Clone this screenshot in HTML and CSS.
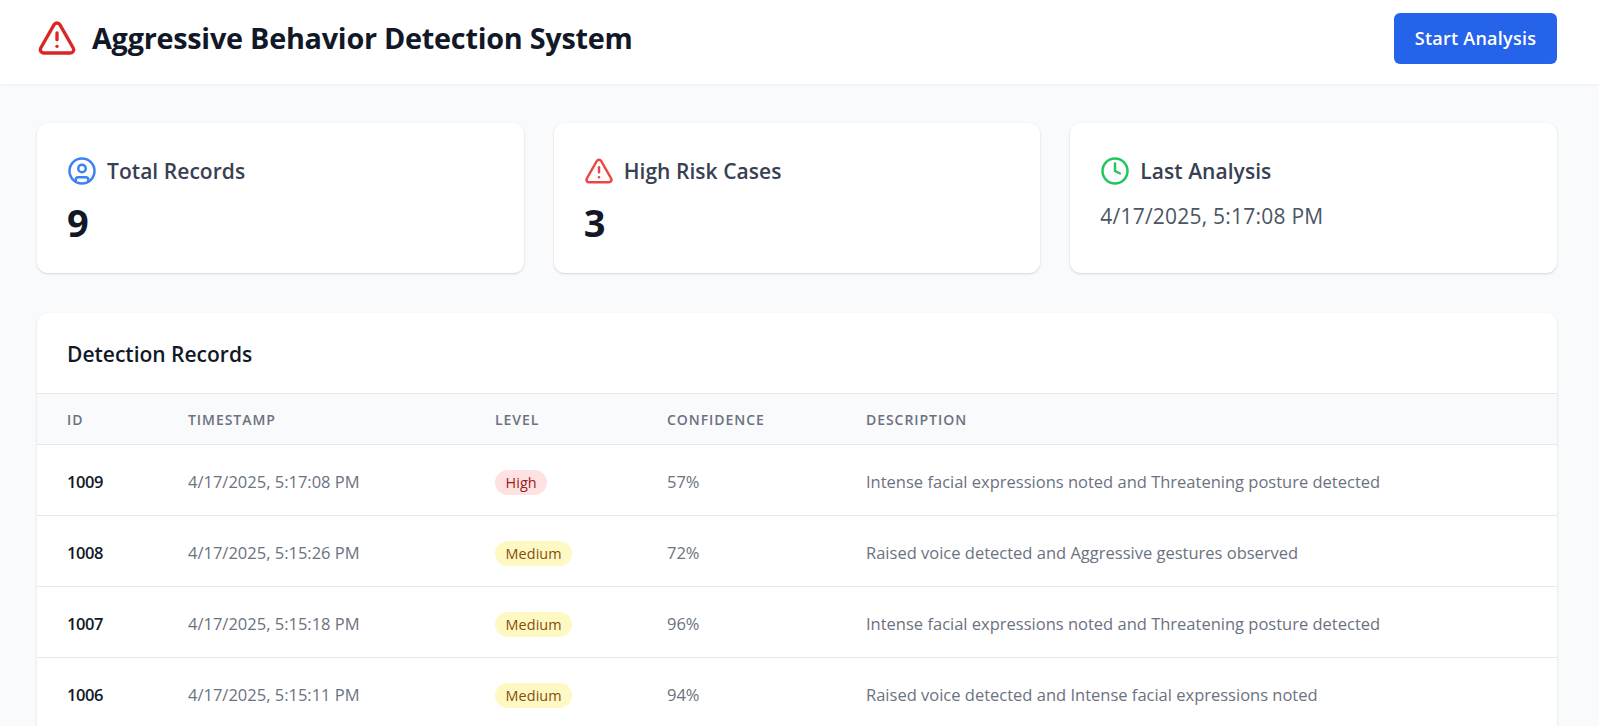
FILE: index.html
```html
<!DOCTYPE html>
<html lang="en">
<head>
<meta charset="utf-8">
<title>Aggressive Behavior Detection System</title>
<link rel="stylesheet" href="styles.css">
</head>
<body>
<header class="topbar">
  <div class="brand">
    <svg class="brand-icon" viewBox="0 0 24 24" fill="none" stroke="currentColor" stroke-width="2" stroke-linecap="round" stroke-linejoin="round"><path d="m21.73 18-8-14a2 2 0 0 0-3.48 0l-8 14A2 2 0 0 0 4 21h16a2 2 0 0 0 1.73-3Z"/><path d="M12 9v4"/><path d="M12 17h.01"/></svg>
    <h1 class="title">Aggressive Behavior Detection System</h1>
  </div>
  <button class="primary">Start Analysis</button>
</header>
<main class="content">
  <section class="stats">
    <article class="card">
      <div class="card-head">
        <svg class="icon icon-blue" viewBox="0 0 24 24" fill="none" stroke="currentColor" stroke-width="2" stroke-linecap="round" stroke-linejoin="round"><circle cx="12" cy="12" r="10"/><circle cx="12" cy="10" r="3"/><path d="M7 20.662V19a2 2 0 0 1 2-2h6a2 2 0 0 1 2 2v1.662"/></svg>
        <h2 class="card-title">Total Records</h2>
      </div>
      <p class="stat">9</p>
    </article>
    <article class="card">
      <div class="card-head">
        <svg class="icon icon-red" viewBox="0 0 24 24" fill="none" stroke="currentColor" stroke-width="2" stroke-linecap="round" stroke-linejoin="round"><path d="m21.73 18-8-14a2 2 0 0 0-3.48 0l-8 14A2 2 0 0 0 4 21h16a2 2 0 0 0 1.73-3Z"/><path d="M12 9v4"/><path d="M12 17h.01"/></svg>
        <h2 class="card-title">High Risk Cases</h2>
      </div>
      <p class="stat">3</p>
    </article>
    <article class="card">
      <div class="card-head">
        <svg class="icon icon-green" viewBox="0 0 24 24" fill="none" stroke="currentColor" stroke-width="2" stroke-linecap="round" stroke-linejoin="round"><circle cx="12" cy="12" r="10"/><polyline points="12 6 12 12 16 14"/></svg>
        <h2 class="card-title">Last Analysis</h2>
      </div>
      <p class="stat-time">4/17/2025, 5:17:08 PM</p>
    </article>
  </section>
  <section class="panel">
    <h2 class="panel-title">Detection Records</h2>
    <table class="records">
      <thead>
        <tr><th class="c-id">ID</th><th class="c-time">Timestamp</th><th class="c-level">Level</th><th class="c-conf">Confidence</th><th>Description</th></tr>
      </thead>
      <tbody>
        <tr><td class="id">1009</td><td>4/17/2025, 5:17:08 PM</td><td><span class="badge high">High</span></td><td>57%</td><td>Intense facial expressions noted and Threatening posture detected</td></tr>
        <tr><td class="id">1008</td><td>4/17/2025, 5:15:26 PM</td><td><span class="badge medium">Medium</span></td><td>72%</td><td>Raised voice detected and Aggressive gestures observed</td></tr>
        <tr><td class="id">1007</td><td>4/17/2025, 5:15:18 PM</td><td><span class="badge medium">Medium</span></td><td>96%</td><td>Intense facial expressions noted and Threatening posture detected</td></tr>
        <tr><td class="id">1006</td><td>4/17/2025, 5:15:11 PM</td><td><span class="badge medium">Medium</span></td><td>94%</td><td>Raised voice detected and Intense facial expressions noted</td></tr>
      </tbody>
    </table>
  </section>
</main>
</body>
</html>
```
FILE: styles.css
```css
* { box-sizing: border-box; }
html, body { height: 100%; }
body {
  margin: 0;
  background: #f9fafb;
  font-family: "Open Sans", "Noto Sans", sans-serif;
  color: #111827;
  overflow: hidden;
}
.topbar {
  height: 84px;
  padding: 0 42px 8px 37px;
  background: #fff;
  box-shadow: 0 1px 2px rgba(0,0,0,.05);
  display: flex;
  align-items: center;
  justify-content: space-between;
}
.brand { display: flex; align-items: center; gap: 15px; }
.brand-icon { width: 40px; height: 40px; color: #dc2626; }
.title { margin: 0; font-size: 28.8px; font-weight: 700; line-height: 36px; color: #111827; letter-spacing: -.25px; }
.primary {
  width: 163px;
  height: 51px;
  border: 0;
  border-radius: 6px;
  background: #2563eb;
  color: #fff;
  font: 600 18px "Open Sans", sans-serif;
  letter-spacing: .24px;
}
.content { padding: 39px 42px 0 37px; }
.stats { display: grid; grid-template-columns: repeat(3, 1fr); gap: 30px; }
.card {
  height: 150px;
  padding: 33px 30px 0;
  background: #fff;
  border-radius: 11px;
  box-shadow: 0 1px 3px rgba(0,0,0,.1), 0 1px 2px rgba(0,0,0,.06);
}
.card-head { display: flex; align-items: center; gap: 10px; height: 30px; }
.icon { width: 30px; height: 30px; flex: none; }
.icon-blue { color: #3b82f6; }
.icon-red { color: #ef4444; }
.icon-green { color: #22c55e; }
.card-title { margin: 0; font-size: 21px; font-weight: 600; color: #374151; letter-spacing: .05px; }
.stat { margin: 13px 0 0; font-size: 38px; line-height: 46px; font-weight: 700; color: #111827; }
.stat-time { margin: 16px 0 0; font-size: 21px; line-height: 28px; color: #4b5563; font-weight: 500; letter-spacing: .22px; }
.panel {
  margin-top: 40px;
  background: #fff;
  border-radius: 11px 11px 0 0;
  box-shadow: 0 1px 3px rgba(0,0,0,.1), 0 1px 2px rgba(0,0,0,.06);
}
.panel-title { margin: 0; height: 80px; padding: 0 30px; font-size: 21px; line-height: 82px; font-weight: 600; color: #111827; }
.records { width: 100%; border-collapse: collapse; table-layout: fixed; }
.records th {
  height: 51px;
  padding: 0 30px;
  background: #f9fafb;
  border-top: 1px solid #e5e7eb;
  border-bottom: 1px solid #e5e7eb;
  text-align: left;
  font-size: 14px;
  font-weight: 600;
  color: #6b7280;
  text-transform: uppercase;
  letter-spacing: .95px;
}
.c-id { width: 121px; }
.c-time { width: 307px; }
.c-level { width: 172px; }
.c-conf { width: 199px; }
.records td {
  height: 71px;
  padding: 2px 30px 0;
  border-bottom: 1px solid #e5e7eb;
  font-size: 16.5px;
  color: #6b7280;
}
.records td.id { font-weight: 600; color: #111827; letter-spacing: -.4px; }
.badge {
  display: inline-block;
  padding: 0 10.5px;
  height: 25px;
  line-height: 25px;
  border-radius: 13px;
  font-size: 14.4px;
  font-weight: 500;
  letter-spacing: .1px;
  position: relative;
  top: 1px;
}
.high { background: #fee2e2; color: #991b1b; }
.medium { background: #fef9c3; color: #854d0e; }
```
